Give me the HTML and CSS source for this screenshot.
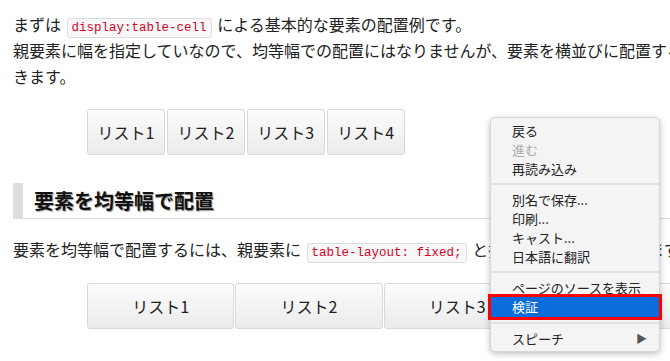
FILE: index.html
```html
<!DOCTYPE html>
<html lang="ja">
<head>
    <meta charset="UTF-8">
    <title>table-cell の配置例</title>
    <link rel="stylesheet" href="styles.css">
</head>
<body>
<div class="page">
    <p class="text intro">まずは <code>display:table-cell</code> による基本的な要素の配置例です。<br>親要素に幅を指定していなので、均等幅での配置にはなりませんが、要素を横並びに配置することができます。</p>

    <ul class="cells">
        <li>リスト1</li>
        <li>リスト2</li>
        <li>リスト3</li>
        <li>リスト4</li>
    </ul>

    <h2 class="section-title">要素を均等幅で配置</h2>

    <p class="text lead">要素を均等幅で配置するには、親要素に <code>table-layout: fixed;</code> と指定して横並びにできます。</p>

    <ul class="cells cells-fixed">
        <li>リスト1</li>
        <li>リスト2</li>
        <li>リスト3</li>
        <li>リスト4</li>
    </ul>
</div>

<!-- right click menu -->
<div class="menu">
    <div class="menu-item">戻る</div>
    <div class="menu-item disabled">進む</div>
    <div class="menu-item">再読み込み</div>
    <div class="menu-sep"></div>
    <div class="menu-item">別名で保存...</div>
    <div class="menu-item">印刷...</div>
    <div class="menu-item">キャスト...</div>
    <div class="menu-item">日本語に翻訳</div>
    <div class="menu-sep"></div>
    <div class="menu-item">ページのソースを表示</div>
    <div class="menu-item active">検証</div>
    <div class="menu-sep"></div>
    <div class="menu-item has-sub">スピーチ <span class="arrow">&#9654;</span></div>
</div>
</body>
</html>
```

FILE: styles.css
```css
/* Base */
* {
    box-sizing: border-box;
    margin: 0;
    padding: 0;
}

html, body {
    overflow: hidden;
}

body {
    font-family: "Noto Sans CJK JP", "Noto Sans", sans-serif;
    color: #222;
    background: #fff;
    width: 670px;
    height: 361px;
    position: relative;
}

.page {
    width: 753px;
    padding: 11px 0 0 13px;
}

/* Paragraphs */
.text {
    font-size: 16px;
    line-height: 26px;
    width: 740px;
}

.lead {
    margin-top: 17px;
}

code {
    font-family: "Liberation Mono", "DejaVu Sans Mono", monospace;
    font-size: 12.5px;
    line-height: 15px;
    color: #d8001e;
    background: #f8f8f8;
    border: 1px solid #ddd;
    border-radius: 3px;
    padding: 2px 4px;
    margin: 0 2px;
}

/* Table cell rows */
.cells {
    list-style: none;
    display: flex;
    gap: 2px;
    margin: 20px 0 0 74px;
}

.cells li {
    height: 46px;
    line-height: 44px;
    padding: 0 9.5px;
    font-size: 16px;
    text-align: center;
    background: linear-gradient(#fcfcfc, #ebebeb);
    border: 1px solid #d9d9d9;
    border-radius: 3px;
}

.cells-fixed {
    display: grid;
    grid-template-columns: repeat(4, 1fr);
    gap: 1px;
    width: 592px;
    margin-top: 21px;
}

/* Heading */
.section-title {
    margin-top: 28px;
    height: 36px;
    line-height: 35px;
    font-size: 20px;
    font-weight: bold;
    color: #111;
    padding-left: 11px;
    border-left: 10px solid #ddd;
    border-bottom: 1px solid #ddd;
    text-shadow: 1px 1px 1px #999;
}

/* Context menu */
.menu {
    position: absolute;
    left: 490px;
    top: 117px;
    width: 170px;
    padding: 3px 0;
    background: #f4f4f4;
    border: 1px solid #d6d6d6;
    border-radius: 5px;
    box-shadow: 0 2px 6px rgba(0,0,0,0.25);
    font-size: 13px;
}

.menu-item {
    height: 19px;
    line-height: 19px;
    padding: 0 12px 0 21px;
    color: #222;
}

.menu-item.disabled {
    color: #aaa;
}

.menu-item.active {
    height: 20px;
    line-height: 20px;
    background: #0b6ddb;
    color: #fff;
    outline: 3px solid #f00;
    position: relative;
}

.menu-item.has-sub {
    display: flex;
    justify-content: space-between;
}

.arrow {
    font-size: 11px;
    color: #555;
}

.menu-sep {
    height: 2px;
    background: #e2e2e2;
    margin: 5px 0;
}
```
